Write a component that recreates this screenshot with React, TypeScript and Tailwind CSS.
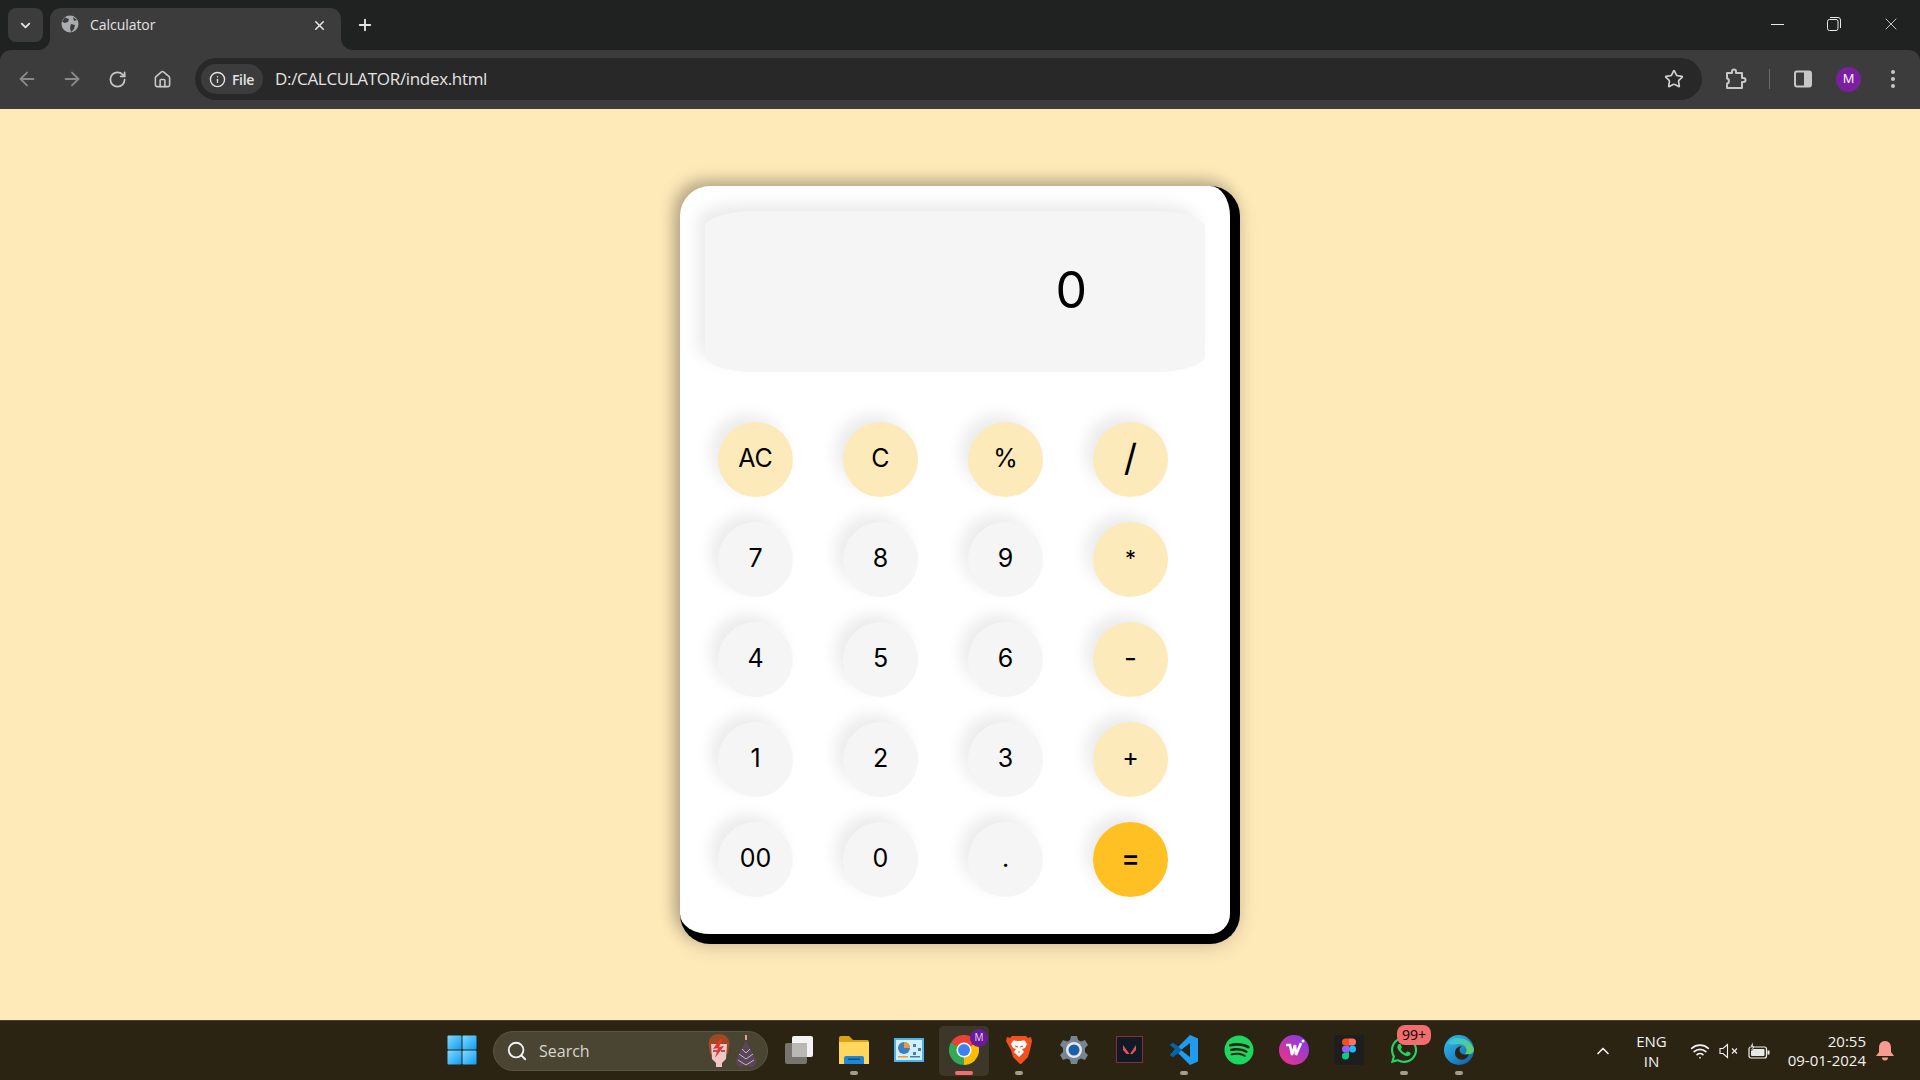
import {
  ArrowLeft,
  ArrowRight,
  ChevronDown,
  ChevronUp,
  Home,
  Info,
  Plus,
  RotateCw,
  Search,
  Star,
  Wifi,
  X,
} from "lucide-react";
import { FaSpotify, FaWhatsapp } from "react-icons/fa";

const rows = [
  [
    { label: "AC", kind: "op" },
    { label: "C", kind: "op" },
    { label: "%", kind: "op" },
    { label: "/", kind: "op" },
  ],
  [
    { label: "7", kind: "num" },
    { label: "8", kind: "num" },
    { label: "9", kind: "num" },
    { label: "*", kind: "op" },
  ],
  [
    { label: "4", kind: "num" },
    { label: "5", kind: "num" },
    { label: "6", kind: "num" },
    { label: "-", kind: "op" },
  ],
  [
    { label: "1", kind: "num" },
    { label: "2", kind: "num" },
    { label: "3", kind: "num" },
    { label: "+", kind: "op" },
  ],
  [
    { label: "00", kind: "num" },
    { label: "0", kind: "num" },
    { label: ".", kind: "num" },
    { label: "=", kind: "eq" },
  ],
];

function GlobeIcon() {
  return (
    <svg width="18" height="18" viewBox="0 0 18 18">
      <circle cx="9" cy="9" r="8.5" fill="#a9adb2" />
      <path d="M4 2.5 8 4 7 7 3.5 8 1 6.5ZM10 9l4 1-1 4-3 3-1-4ZM12 2l4 3-3 1Z" fill="#3c3c3c" />
    </svg>
  );
}

function ExtensionIcon() {
  return (
    <svg width="22" height="22" viewBox="0 0 22 22" fill="none" stroke="#c7c7c7" strokeWidth="2" strokeLinejoin="round">
      <path d="M2 5h5V3.500a2 2 0 0 1 4 0V5h6v5h1.500a2 2 0 0 1 0 4H17v6H2v-4.500c2.500 0 2.500-5 0-5Z" />
    </svg>
  );
}

function SidePanelIcon() {
  return (
    <svg width="18" height="18" viewBox="0 0 18 18">
      <rect x="1" y="1.5" width="16" height="15" rx="2" fill="none" stroke="#c7c7c7" strokeWidth="2" />
      <rect x="10" y="2" width="7" height="14" fill="#c7c7c7" />
    </svg>
  );
}

function RestoreIcon() {
  return (
    <svg width="14" height="14" viewBox="0 0 14 14" fill="none" stroke="#e8e8e8" strokeWidth="1">
      <rect x="0.5" y="2.5" width="10.5" height="11" rx="2" />
      <path d="M3 .5h8a2.5 2.5 0 0 1 2.5 2.5v8" />
    </svg>
  );
}

function WindowsLogo() {
  return (
    <svg width="30" height="30" viewBox="0 0 30 30">
      <defs>
        <linearGradient id="win" x1="0" y1="0" x2="1" y2="1">
          <stop offset="0" stopColor="#7fdcff" />
          <stop offset="1" stopColor="#0f9bf5" />
        </linearGradient>
      </defs>
      <rect x="0.5" y="0.5" width="14" height="14" rx="1" fill="url(#win)" />
      <rect x="15.5" y="0.5" width="14" height="14" rx="1" fill="url(#win)" />
      <rect x="0.5" y="15.5" width="14" height="14" rx="1" fill="url(#win)" />
      <rect x="15.5" y="15.5" width="14" height="14" rx="1" fill="url(#win)" />
    </svg>
  );
}

function BowieFace() {
  return (
    <svg width="22" height="34" viewBox="0 0 22 34">
      <path d="M1 13C-1 4 5 0 11 0s12 4 10 13l-1 7H2Z" fill="#9c4a22" />
      <path d="M3 10h16l-1 15-4 4v4H8v-4l-4-4Z" fill="#f2c6c6" />
      <path d="M12 5 5 15l5-1-3 10 9-12-5 1 4-8Z" fill="#e0342c" />
      <path d="M5 17h4M13 17h4" stroke="#5a4a5a" strokeWidth="1.5" />
    </svg>
  );
}

function BowieFigure() {
  return (
    <svg width="22" height="32" viewBox="0 0 22 32">
      <path d="M11 0v6l-4 7-6 12c0 5 2 7 6 7l4-3 4 3c4 0 6-2 6-7l-6-12-4-7Z" fill="#5a4658" />
      <path d="M4 19l7 5 7-5M3 25l8 5 8-5M7 14l4 4 4-4" stroke="#c9b7c9" strokeWidth="1" fill="none" />
      <path d="M11 0v5" stroke="#e2a58c" strokeWidth="2" />
    </svg>
  );
}

function TaskViewIcon() {
  return (
    <svg width="30" height="30" viewBox="0 0 30 30">
      <rect x="1" y="8" width="22" height="21" rx="2" fill="#77756f" />
      <rect x="8" y="1" width="21" height="21" rx="2" fill="#f3f3f3" />
      <rect x="8" y="8" width="15" height="14" fill="#b9b8b4" />
    </svg>
  );
}

function FolderIcon() {
  return (
    <svg width="30" height="28" viewBox="0 0 30 28">
      <path d="M0 2a2 2 0 0 1 2-2h8l4 4h14a2 2 0 0 1 2 2v2H0Z" fill="#d9a40d" />
      <path d="M0 6h30v22H0Z" fill="#ffd75e" />
      <path d="M5 28v-6a2 2 0 0 1 2-2h16a2 2 0 0 1 2 2v6Z" fill="#1f87d6" />
      <rect x="9" y="22.500" width="12" height="1.500" fill="#0b4f8c" />
    </svg>
  );
}

function ControlPanelIcon() {
  return (
    <svg width="30" height="24" viewBox="0 0 30 24">
      <rect width="30" height="24" fill="#49b5ee" />
      <rect x="2" y="2" width="26" height="20" fill="#d5effa" />
      <circle cx="10" cy="10" r="6" fill="#3c7fc7" />
      <path d="M10 10V4a6 6 0 0 1 6 6Z" fill="#f29a2e" />
      <path d="M19 6h3v3h-3ZM24 10h3v3h-3ZM19 14h3v3h-3Z" fill="#3c7fc7" />
      <rect x="4" y="18" width="10" height="1.500" fill="#f29a2e" />
      <rect x="16" y="18" width="10" height="1.500" fill="#3c7fc7" />
    </svg>
  );
}

function ChromeIcon({ size = 30 }: { size?: number }) {
  return (
    <svg width={size} height={size} viewBox="0 0 30 30">
      <path d="M15 15 2 7.500A15 15 0 0 1 28 7.500Z" fill="#ea4335" />
      <path d="M15 15 28 7.500A15 15 0 0 1 15 30Z" fill="#fbbc04" />
      <path d="M15 15 15 30A15 15 0 0 1 2 7.500Z" fill="#34a853" />
      <circle cx="15" cy="15" r="7.500" fill="#fff" />
      <circle cx="15" cy="15" r="6" fill="#3b82f0" />
    </svg>
  );
}

function BraveIcon() {
  return (
    <svg width="26" height="30" viewBox="0 0 26 30">
      <path d="M6 1h14l2 2 3-1 1 4-2 9-2 7-7 7-1 0-7-7-2-7L0 6l1-4 3 1Z" fill="#f4501e" />
      <path d="M13 6c3 0 5-1 6 0l2 3-2 4-3 1 2 3-5 5-5-5 2-3-3-1-2-4 2-3c1-1 3 0 6 0Z" fill="#fff" />
      <path d="M9 11l3 1M17 11l-3 1M12 17h2" stroke="#f4501e" strokeWidth="1.200" />
    </svg>
  );
}

function SettingsIcon() {
  return (
    <svg width="30" height="30" viewBox="0 0 30 30">
      <path
        d="M12 1h6l1 4 3 1.500 4-1.500 3 5-3 3v4l3 3-3 5-4-1.500L19 25l-1 4h-6l-1-4-3-1.500L4 25l-3-5 3-3v-4L1 10l3-5 4 1.500L11 5Z"
        fill="#78848f"
      />
      <circle cx="15" cy="15" r="8" fill="#e4e8ec" />
      <circle cx="15" cy="15" r="5.500" fill="#1c5fa8" />
    </svg>
  );
}

function ValorantIcon() {
  return (
    <svg width="27" height="27" viewBox="0 0 27 27">
      <rect x="0.500" y="0.500" width="26" height="26" fill="#111a24" stroke="#8a2c3a" />
      <path d="M7 9 13.500 18H10.500L7 14ZM20 9V14L16.500 18H14Z" fill="#e8505b" />
    </svg>
  );
}

function VsCodeIcon() {
  return (
    <svg width="30" height="30" viewBox="0 0 30 30">
      <path d="M1 10 4 8l7 5 10-13 0 8-10 7 0 0-7 7-3-2 6-7Z" fill="#0a75c2" />
      <path d="M21 0l8 3.500v23L21 30 9 18l3-3 9 7V8l-9 7-3-3Z" fill="#1f9cf0" />
      <path d="M1 20l6-5-6-5 3-2 7 5 2 2-2 2-7 5Z" fill="#0065a9" />
    </svg>
  );
}

function WpsIcon() {
  return (
    <svg width="30" height="30" viewBox="0 0 30 30">
      <defs>
        <linearGradient id="wps" x1="0" y1="1" x2="1" y2="0">
          <stop offset="0" stopColor="#f5317f" />
          <stop offset="1" stopColor="#7a3df0" />
        </linearGradient>
      </defs>
      <circle cx="15" cy="15" r="15" fill="url(#wps)" />
      <path d="M7 10h4l2 10 3-10 1 10 5-12" fill="none" stroke="#fff" strokeWidth="2.500" />
      <circle cx="24" cy="6" r="1.500" fill="#fff" />
    </svg>
  );
}

function FigmaIcon() {
  return (
    <svg width="30" height="30" viewBox="0 0 30 30">
      <rect width="30" height="30" rx="3" fill="#1e1e1e" />
      <path d="M8 7a3.500 3.500 0 0 1 3.500-3.500H15v7h-3.500A3.500 3.500 0 0 1 8 7Z" fill="#f24e1e" />
      <path d="M15 3.500h3.500a3.500 3.500 0 0 1 0 7H15Z" fill="#ff7262" />
      <path d="M8 14a3.500 3.500 0 0 1 3.500-3.500H15v7h-3.500A3.500 3.500 0 0 1 8 14Z" fill="#a259ff" />
      <circle cx="18.500" cy="14" r="3.500" fill="#1abcfe" />
      <path d="M8 21a3.500 3.500 0 0 1 3.500-3.500H15V21a3.500 3.500 0 0 1-7 0Z" fill="#0acf83" />
    </svg>
  );
}

function EdgeIcon() {
  return (
    <svg width="30" height="30" viewBox="0 0 30 30">
      <defs>
        <linearGradient id="edge1" x1="0" y1="0" x2="1" y2="1">
          <stop offset="0" stopColor="#35c1f1" />
          <stop offset="1" stopColor="#0c59a4" />
        </linearGradient>
        <linearGradient id="edge2" x1="0" y1="0" x2="1" y2="1">
          <stop offset="0" stopColor="#35c1f1" />
          <stop offset="1" stopColor="#6ad04f" />
        </linearGradient>
      </defs>
      <circle cx="15" cy="15" r="15" fill="url(#edge1)" />
      <path d="M4 8C8 1 25 0 30 14c0 5-5 6-9 5 4-4 0-10-6-10-4 0-8 2-11-1Z" fill="url(#edge2)" />
      <path d="M21 24c-5 2-10-1-10-6 0-4 3-7 7-7-3 2-3 5-1 7s4 2 8 1c-1 2-2 4-4 5Z" fill="#2b2413" />
    </svg>
  );
}

function MutedIcon() {
  return (
    <svg width="20" height="16" viewBox="0 0 20 16" fill="none" stroke="#f2f2f2" strokeWidth="1.100">
      <path d="M1 5.500h3L8.500 1.500v13L4 10.500H1Z" />
      <path d="M13 5.500l5 5M18 5.500l-5 5" />
    </svg>
  );
}

function BatteryIcon() {
  return (
    <svg width="22" height="18" viewBox="0 0 22 18">
      <rect x="1" y="5" width="17.500" height="11" rx="2" fill="none" stroke="#f2f2f2" strokeWidth="1.200" />
      <rect x="3" y="7" width="13.500" height="7" rx="1" fill="#e8e8e8" />
      <rect x="19.500" y="8.500" width="2" height="4" fill="#f2f2f2" />
      <path d="M5 0 2 5h2.500L3.500 9 7.500 4H5Z" fill="#f2f2f2" stroke="#2b2413" strokeWidth="0.500" />
    </svg>
  );
}

function BellIcon() {
  return (
    <svg width="18" height="20" viewBox="0 0 18 20">
      <path d="M9 0c4 0 6 3 6 7v4l3 4H0l3-4V7c0-4 2-7 6-7Z" fill="#f59b8f" />
      <path d="M6 16.500h6a3 3 0 0 1-6 0Z" fill="#f59b8f" />
    </svg>
  );
}

function AppSlot({
  children,
  dot,
  active,
}: {
  children: React.ReactNode;
  dot?: boolean;
  active?: boolean;
}) {
  return (
    <div
      className={`relative flex h-[50px] w-[50px] shrink-0 items-center justify-center rounded-[5px] pb-[2px] ${
        active ? "bg-[#3d372a]" : ""
      }`}
    >
      {children}
      {dot && <span className="absolute bottom-[1px] h-[4px] w-[8px] rounded-full bg-[#a19d92]" />}
      {active && <span className="absolute bottom-[1px] h-[4px] w-[18px] rounded-full bg-[#f26d6d]" />}
    </div>
  );
}

function BrowserChrome() {
  return (
    <header className="bg-[#202221] text-[#e3e3e3] [font-family:'Open_Sans',sans-serif]">
      <div className="flex h-[50px] items-end pl-2">
        <div className="mb-2 flex h-[34px] w-[35px] items-center justify-center rounded-lg bg-[#3c3c3c]">
          <ChevronDown size={15} strokeWidth={3} />
        </div>
        <div className="relative ml-[7px] flex h-[42px] w-[291px] items-start rounded-t-[11px] bg-[#3c3c3c] px-[11px] pt-[7px]">
          <GlobeIcon />
          <span className="ml-[11px] text-[14px] leading-[20px] tracking-[-0.05px] text-[#e3e3e3]">Calculator</span>
          <X size={15} strokeWidth={2.5} className="absolute right-[14px] top-[10px]" />
          <svg width="12" height="12" viewBox="0 0 12 12" className="absolute -left-3 bottom-0">
            <path d="M12 0v12H0A12 12 0 0 0 12 0Z" fill="#3c3c3c" />
          </svg>
          <svg width="12" height="12" viewBox="0 0 12 12" className="absolute -right-3 bottom-0">
            <path d="M0 0v12h12A12 12 0 0 1 0 0Z" fill="#3c3c3c" />
          </svg>
        </div>
        <Plus size={18} strokeWidth={2.5} className="mb-[16px] ml-[15px]" />
        <div className="mb-[16px] ml-auto flex items-center">
          <div className="flex w-[55px] justify-center">
            <span className="h-[1px] w-[13px] bg-[#e8e8e8]" />
          </div>
          <div className="flex w-[57px] justify-center">
            <RestoreIcon />
          </div>
          <div className="flex w-[58px] justify-center">
            <X size={20} strokeWidth={1} />
          </div>
        </div>
      </div>
      <div className="flex h-[59px] items-center rounded-t-[11px] bg-[#3c3c3c] pb-[1px] pl-[16px] pr-[16px]">
        <ArrowLeft size={22} strokeWidth={2} className="text-[#8a8a8a]" />
        <ArrowRight size={22} strokeWidth={2} className="ml-[23px] text-[#8a8a8a]" />
        <RotateCw size={19} strokeWidth={2.2} className="ml-[25px] text-[#c7c7c7]" />
        <Home size={19} strokeWidth={2} className="ml-[26px] text-[#c7c7c7]" />
        <div className="ml-[23px] flex h-[42px] w-[1507px] items-center rounded-full bg-[#282828] pl-[6px] pr-[18px]">
          <div className="flex h-[30px] w-[62px] items-center justify-center gap-[6px] rounded-full bg-[#3c3c3c] pr-[1px]">
            <Info size={17} strokeWidth={2} />
            <span className="text-[14px] font-semibold tracking-[-0.3px]">File</span>
          </div>
          <span className="ml-[12px] text-[17px] tracking-[-0.33px]">D:/CALCULATOR/index.html</span>
          <Star size={20} strokeWidth={2} className="ml-auto text-[#d0d0d0]" />
        </div>
        <div className="ml-[23px] flex">
          <ExtensionIcon />
        </div>
        <div className="ml-[22px] h-[20px] w-[1px] bg-[#6a6a6a]" />
        <div className="ml-[24px] flex">
          <SidePanelIcon />
        </div>
        <div className="ml-[24px] flex h-[25px] w-[25px] items-center justify-center rounded-full bg-[#7b1fa2] text-[13px] text-white">
          M
        </div>
        <div className="ml-[30px] flex flex-col gap-[3px]">
          <span className="h-[4px] w-[4px] rounded-full bg-[#c7c7c7]" />
          <span className="h-[4px] w-[4px] rounded-full bg-[#c7c7c7]" />
          <span className="h-[4px] w-[4px] rounded-full bg-[#c7c7c7]" />
        </div>
      </div>
    </header>
  );
}

function Calculator() {
  return (
    <div className="w-[560px] rounded-[30px] border-r-[10px] border-b-[10px] border-black bg-white shadow-[-6px_-6px_15px_rgba(0,0,0,0.25),0_4px_20px_rgba(0,0,0,0.12)]">
      <div className="px-[25px] pt-[25px]">
        <div className="flex h-[161px] w-[500px] items-center justify-end rounded-[10%] bg-[#f5f5f5] pb-[2px] pr-[118px] text-[50px] shadow-[-8px_-8px_15px_rgba(0,0,0,0.08)]">
          0
        </div>
      </div>
      <div className="mt-[50px] mb-[37px] ml-[38px] grid w-fit grid-cols-[repeat(4,75px)] gap-x-[50px] gap-y-[25px]">
        {rows.flat().map((key) => (
          <button
            key={key.label}
            className={`flex h-[75px] w-[75px] items-center justify-center rounded-full text-[25px] text-black shadow-[-8px_-8px_15px_rgba(0,0,0,0.08)] ${
              key.kind === "num" ? "bg-[#f5f5f5]" : key.kind === "op" ? "bg-[#fdeaba]" : "bg-[#ffc024]"
            }`}
          >
            {key.label === "/" ? (
              <span className="pb-[3px] text-[37px]">/</span>
            ) : key.label === "*" ? (
              <span className="pb-[2px] text-[22px]">*</span>
            ) : key.label === "-" ? (
              <span className="pb-[2px] text-[28px]">-</span>
            ) : key.label === "=" ? (
              <span className="pb-[3px] text-[28px] font-medium">=</span>
            ) : key.label === "+" ? (
              <span className="pb-[2px]">+</span>
            ) : (
              key.label
            )}
          </button>
        ))}
      </div>
    </div>
  );
}

function Taskbar() {
  return (
    <footer className="flex h-[60px] items-center border-t border-[#4a4433] bg-[#2b2413] text-[#f2f2f2] [font-family:'Open_Sans',sans-serif]">
      <div className="ml-[437px] flex h-[50px] w-[50px] items-center justify-center pb-[1px]">
        <WindowsLogo />
      </div>
      <div className="ml-[6px] flex h-[40px] w-[275px] items-center rounded-full border border-[#5a5444] bg-[#4a4433] pl-[12px] pr-[10px]">
        <Search size={22} strokeWidth={2} />
        <span className="ml-[11px] text-[16px] text-[#d8d6d0]">Search</span>
        <div className="ml-auto flex items-center gap-[5px]">
          <BowieFace />
          <BowieFigure />
        </div>
      </div>
      <div className="ml-[6px] flex items-center gap-[5px]">
        <AppSlot>
          <TaskViewIcon />
        </AppSlot>
        <AppSlot dot>
          <FolderIcon />
        </AppSlot>
        <AppSlot>
          <ControlPanelIcon />
        </AppSlot>
        <AppSlot active>
          <ChromeIcon />
          <span className="absolute right-[1px] top-[3px] flex h-[18px] w-[18px] items-center justify-center rounded-full bg-[#6a1b9a] text-[10px] text-[#e9d7f2]">
            M
          </span>
        </AppSlot>
        <AppSlot dot>
          <BraveIcon />
        </AppSlot>
        <AppSlot>
          <SettingsIcon />
        </AppSlot>
        <AppSlot>
          <ValorantIcon />
        </AppSlot>
        <AppSlot dot>
          <VsCodeIcon />
        </AppSlot>
        <AppSlot>
          <FaSpotify size={30} color="#1ed760" />
        </AppSlot>
        <AppSlot>
          <WpsIcon />
        </AppSlot>
        <AppSlot>
          <FigmaIcon />
        </AppSlot>
        <AppSlot dot>
          <FaWhatsapp size={30} color="#25d366" />
          <span className="absolute -top-[1px] left-[18px] flex h-[20px] w-[34px] items-center justify-center rounded-[8px] bg-[#f26d6d] text-[14px] text-black">
            99+
          </span>
        </AppSlot>
        <AppSlot dot>
          <EdgeIcon />
        </AppSlot>
      </div>
      <div className="ml-auto flex items-center pr-[26px]">
        <ChevronUp size={20} strokeWidth={2} />
        <div className="ml-[23px] flex flex-col items-center text-[15px] leading-[20px]">
          <span>ENG</span>
          <span>IN</span>
        </div>
        <Wifi size={20} strokeWidth={2} className="ml-[23px]" />
        <div className="ml-[9px] flex">
          <MutedIcon />
        </div>
        <div className="ml-[9px] flex">
          <BatteryIcon />
        </div>
        <div className="ml-[18px] flex flex-col items-end text-[15px] leading-[19px]">
          <span>20:55</span>
          <span>09-01-2024</span>
        </div>
        <div className="ml-[10px] flex">
          <BellIcon />
        </div>
      </div>
    </footer>
  );
}

export default function App() {
  return (
    <div className="flex h-[1080px] w-[1920px] flex-col overflow-hidden [font-family:Inter,sans-serif]">
      <BrowserChrome />
      <main className="flex flex-1 items-center justify-center bg-[#fee9b9]">
        <Calculator />
      </main>
      <Taskbar />
    </div>
  );
}
